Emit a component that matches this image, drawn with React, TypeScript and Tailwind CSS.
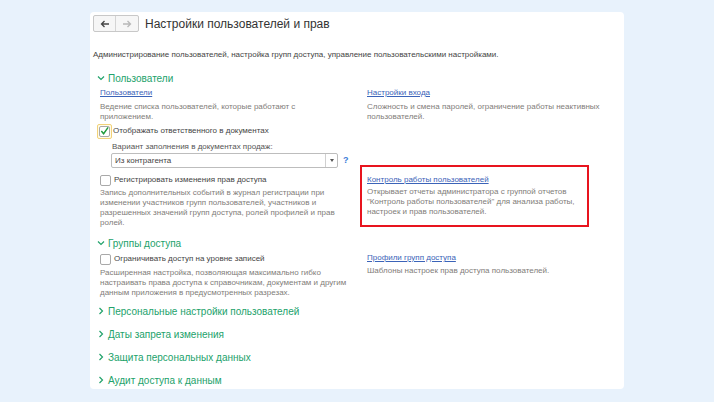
import React from 'react'

const font = { fontFamily: '"Liberation Sans", Arial, sans-serif' }

function ChevronDown() {
  return (
    <svg width="8" height="6" viewBox="0 0 8 6" className="shrink-0">
      <polyline points="1,1.5 4,4.5 7,1.5" fill="none" stroke="#22a26b" strokeWidth="1.2" />
    </svg>
  )
}

function ChevronRight() {
  return (
    <svg width="6" height="8" viewBox="0 0 6 8" className="shrink-0">
      <polyline points="1.5,1 4.5,4 1.5,7" fill="none" stroke="#22a26b" strokeWidth="1.2" />
    </svg>
  )
}

function Box({ checked = false, focused = false }: { checked?: boolean; focused?: boolean }) {
  const box = (
    <span className="flex h-[11px] w-[11px] items-center justify-center rounded-[2px] border border-[#a9a9a9] bg-white">
      {checked && (
        <svg width="10" height="10" viewBox="0 0 10 10">
          <polyline points="1.5,5 4,8 9,1" fill="none" stroke="#1f9a3c" strokeWidth="1.6" />
        </svg>
      )}
    </span>
  )
  if (focused) {
    return (
      <span className="flex h-[15px] w-[15px] items-center justify-center rounded-[2px] border border-[#f2d27a] bg-[#fffbe9]">
        {box}
      </span>
    )
  }
  return box
}

function Section({ title, open }: { title: string; open?: boolean }) {
  return (
    <div className="flex h-[16px] items-center gap-[3px] pl-[3px] text-[10px] text-[#22a26b]">
      <span className="flex w-[9px] justify-center">{open ? <ChevronDown /> : <ChevronRight />}</span>
      <span>{title}</span>
    </div>
  )
}

function Link({ children }: { children: React.ReactNode }) {
  return <div className="h-[12px] text-[8px] leading-[12px] text-[#3b63b8] underline">{children}</div>
}

function Desc({ children }: { children: React.ReactNode }) {
  return <div className="text-[8px] leading-[10px] text-[#7f7d79]">{children}</div>
}

export default function App() {
  return (
    <div style={font} className="min-h-[402px] w-[714px] bg-[#e8f2fc] pt-[12px]">
      <div className="ml-[90px] h-[377px] w-[534px] rounded-[4px] bg-white px-[3px] pt-[3px]">
        {/* header */}
        <div className="flex h-[17px] items-center">
          <div className="flex h-[17px] rounded-[2px] border border-[#c8c8c8] bg-[#f6f6f6]">
            <span className="flex w-[22px] items-center justify-center border-r border-[#d4d4d4]">
              <svg width="10" height="8" viewBox="0 0 10 8">
                <path d="M9 4H1.5M4.5 1L1.5 4L4.5 7" fill="none" stroke="#444" strokeWidth="1.3" />
              </svg>
            </span>
            <span className="flex w-[22px] items-center justify-center">
              <svg width="10" height="8" viewBox="0 0 10 8">
                <path d="M1 4H8.5M5.5 1L8.5 4L5.5 7" fill="none" stroke="#b8b8b8" strokeWidth="1.3" />
              </svg>
            </span>
          </div>
          <span className="ml-[6px] text-[12px] text-[#333]">Настройки пользователей и прав</span>
        </div>

        <div className="mt-[17px] text-[8px] leading-[11px] text-[#444]">
          Администрирование пользователей, настройка групп доступа, управление пользовательскими настройками.
        </div>

        {/* Пользователи */}
        <div className="mt-[10px]">
          <Section title="Пользователи" open />
          <div className="mt-[1px] grid grid-cols-[267px_1fr] pl-[7px]">
            <div className="pr-[21px]">
              <Link>Пользователи</Link>
              <div className="mt-[3px]">
                <Desc>Ведение списка пользователей, которые работают с приложением.</Desc>
              </div>
              <div className="mt-[1px] -ml-[3px] flex h-[16px] items-center gap-[1px] text-[8px] text-[#444]">
                <Box checked focused />
                <span>Отображать ответственного в документах</span>
              </div>
              <div className="ml-[12px] mt-[2px] text-[8px] leading-[12px] text-[#555]">
                Вариант заполнения в документах продаж:
              </div>
              <div className="ml-[11px] flex items-center">
                <div className="flex h-[15px] w-[227px] shrink-0 rounded-[2px] border border-[#bdbdbd] bg-white">
                  <span className="flex flex-1 items-center pl-[3px] text-[8px] text-[#444]">Из контрагента</span>
                  <span className="flex w-[12px] items-center justify-center border-l border-[#d0d0d0]">
                    <svg width="4" height="3" viewBox="0 0 4 3">
                      <polygon points="0,0 4,0 2,3" fill="#555" />
                    </svg>
                  </span>
                </div>
                <span className="ml-[5px] text-[9px] font-bold text-[#3b7dd8]">?</span>
              </div>
            </div>
            <div>
              <Link>Настройки входа</Link>
              <div className="mt-[3px]">
                <Desc>
                  Сложность и смена паролей, ограничение работы неактивных
                  <br />
                  пользователей.
                </Desc>
              </div>
            </div>

            <div className="mt-[5px] pr-[16px]">
              <div className="flex h-[14px] items-center gap-[3px] text-[8px] text-[#444]">
                <Box />
                <span>Регистрировать изменения прав доступа</span>
              </div>
              <div className="mt-[1px]">
                <Desc>
                  Запись дополнительных событий в журнал регистрации при изменении участников групп пользователей, участников и разрешенных значений групп доступа, ролей профилей и прав ролей.
                </Desc>
              </div>
            </div>
            <div className="-ml-[7px] -mt-[3px] w-[229px] self-start border-2 border-[#e8141e] px-[5px] pb-[8px] pt-[7px]">
              <Link>Контроль работы пользователей</Link>
              <div className="mt-[1px]">
                <Desc>
                  Открывает отчеты администратора с группой отчетов "Контроль работы пользователей" для анализа работы, настроек и прав пользователей.
                </Desc>
              </div>
            </div>
          </div>
        </div>

        {/* Группы доступа */}
        <div className="mt-[7px]">
          <Section title="Группы доступа" open />
          <div className="mt-[1px] grid grid-cols-[267px_1fr] pl-[7px]">
            <div className="pr-[8px]">
              <div className="flex h-[14px] items-center gap-[3px] text-[8px] text-[#444]">
                <Box />
                <span>Ограничивать доступ на уровне записей</span>
              </div>
              <div className="mt-[2px]">
                <Desc>
                  Расширенная настройка, позволяющая максимально гибко настраивать права доступа к справочникам, документам и другим данным приложения в предусмотренных разрезах.
                </Desc>
              </div>
            </div>
            <div>
              <Link>Профили групп доступа</Link>
              <div className="mt-[2px]">
                <Desc>Шаблоны настроек прав доступа пользователей.</Desc>
              </div>
            </div>
          </div>
        </div>

        <div className="mt-[5px] flex flex-col gap-[7px]">
          <Section title="Персональные настройки пользователей" />
          <Section title="Даты запрета изменения" />
          <Section title="Защита персональных данных" />
          <Section title="Аудит доступа к данным" />
        </div>
      </div>
    </div>
  )
}
